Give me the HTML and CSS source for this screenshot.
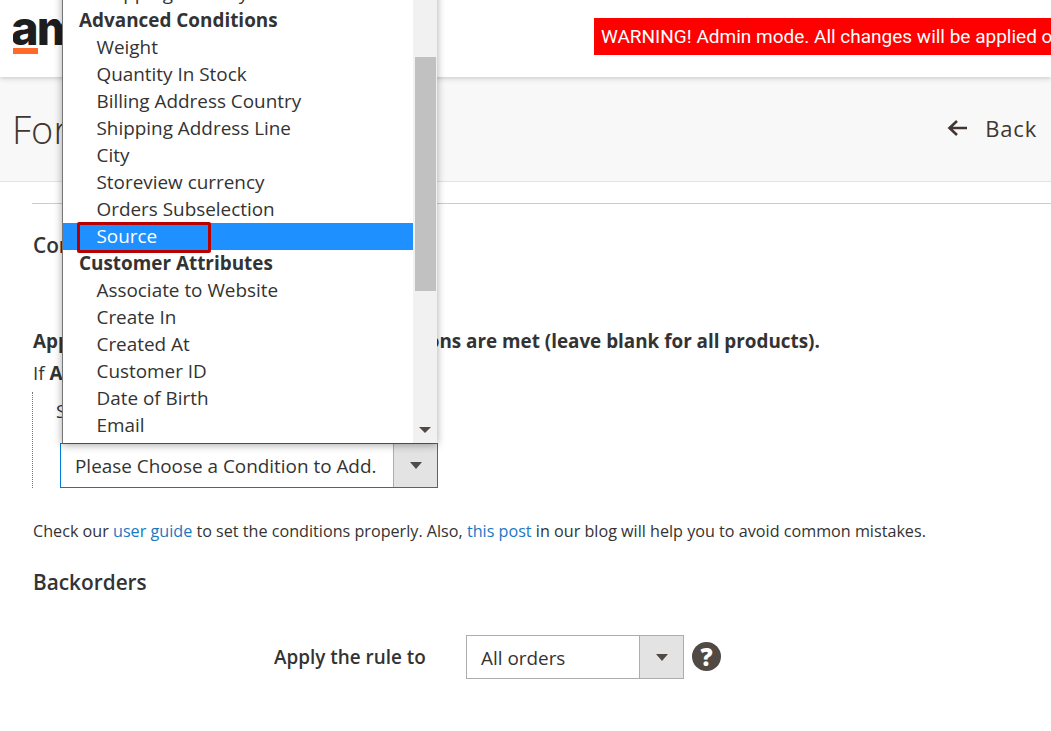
FILE: index.html
```html
<!DOCTYPE html>
<html lang="en">
<head>
    <meta charset="UTF-8">
    <title>Form</title>
    <link rel="stylesheet" href="styles.css">
</head>
<body>
    <header class="top-bar">
        <div class="logo">
            <span class="logo-text">am</span>
            <span class="logo-bar"></span>
        </div>
        <div class="warning">WARNING! Admin mode. All changes will be applied on all store views</div>
    </header>

    <div class="title-band">
        <h1 class="page-title">Form</h1>
        <a class="back-link" href="#">
            <svg class="back-icon" width="20" height="18" viewBox="0 0 20 18">
                <path d="M10 2 2.5 9l7.5 7M2.5 9H20" fill="none" stroke="#41362f" stroke-width="2.6"/>
            </svg>
            <span>Back</span>
        </a>
    </div>

    <main class="content">
        <section class="conditions">
            <h2 class="section-title">Conditions</h2>
            <p class="rule-intro">Apply the rule only if the following conditions are met (leave blank for all products).</p>
            <p class="rule-if">If <b>ALL</b> of these conditions are <b>TRUE</b> :</p>
            <div class="rule-tree">
                <div class="rule-line">Source is</div>
                <div class="select select-active select-add">
                    <span class="select-value">Please Choose a Condition to Add.</span>
                    <span class="select-btn"><i class="arrow"></i></span>
                </div>
            </div>
            <p class="rule-note">Check our <a href="#">user guide</a> to set the conditions properly. Also, <a href="#">this post</a> in our blog will help you to avoid common mistakes.</p>
        </section>

        <section class="backorders">
            <h2 class="section-title">Backorders</h2>
            <div class="field">
                <label class="field-label">Apply the rule to</label>
                <div class="select select-orders">
                    <span class="select-value">All orders</span>
                    <span class="select-btn"><i class="arrow"></i></span>
                </div>
                <span class="help">?</span>
            </div>
        </section>
    </main>

    <div class="dropdown">
        <ul class="dropdown-list">
            <li class="option">Shipping Country</li>
            <li class="group">Advanced Conditions</li>
            <li class="option">Weight</li>
            <li class="option">Quantity In Stock</li>
            <li class="option">Billing Address Country</li>
            <li class="option">Shipping Address Line</li>
            <li class="option">City</li>
            <li class="option">Storeview currency</li>
            <li class="option">Orders Subselection</li>
            <li class="option selected">Source<span class="red-box"></span></li>
            <li class="group">Customer Attributes</li>
            <li class="option">Associate to Website</li>
            <li class="option">Create In</li>
            <li class="option">Created At</li>
            <li class="option">Customer ID</li>
            <li class="option">Date of Birth</li>
            <li class="option">Email</li>
        </ul>
        <div class="scrollbar">
            <div class="scroll-thumb"></div>
            <i class="arrow scroll-arrow"></i>
        </div>
    </div>
</body>
</html>
```

FILE: styles.css
```css
* {
    margin: 0;
    padding: 0;
    box-sizing: border-box;
}

html, body {
    height: 100%;
    overflow: hidden;
}

body {
    font-family: 'Open Sans', sans-serif;
    color: #333333;
    background: white;
    position: relative;
}

a {
    color: #1979c3;
    text-decoration: none;
}

.top-bar {
    height: 77px;
    display: flex;
    align-items: flex-start;
    background: white;
    box-shadow: 0 1px 5px rgba(60, 70, 90, 0.3);
    position: relative;
    padding-left: 13px;
    white-space: nowrap;
}

.logo {
    flex: none;
    width: 49px;
    overflow: hidden;
    padding-top: 5px;
}

.logo-text {
    display: block;
    font-family: Inter, sans-serif;
    font-size: 47px;
    font-weight: 800;
    line-height: 46px;
    letter-spacing: -2px;
    margin-left: -2px;
    color: #1d1d1f;
}

.logo-bar {
    display: block;
    width: 25px;
    height: 6px;
    margin-top: -3px;
    background: #ff6a2b;
}

.warning {
    flex: none;
    margin: 18px 0 0 532px;
    height: 37px;
    padding: 0 8px 0 7px;
    background: #ff0000;
    color: white;
    font-family: Roboto, sans-serif;
    font-size: 19px;
    line-height: 37px;
}

.title-band {
    height: 105px;
    display: flex;
    justify-content: space-between;
    align-items: center;
    padding: 0 14px 0 12px;
    background: #f8f8f8;
    border-bottom: 1px solid #e3e3e3;
}

.page-title {
    font-size: 38px;
    font-weight: 300;
    color: #41362f;
}

.back-link {
    display: flex;
    align-items: center;
    gap: 18px;
    color: #41362f;
    font-size: 22px;
    line-height: 28px;
    letter-spacing: 0.8px;
    margin-top: -2px;
}

.content {
    margin: 21px 0 0 32px;
    border-top: 1px solid #cccccc;
}

.conditions {
    padding: 24px 0 0 1px;
}

.backorders {
    margin-top: 22px;
    padding-left: 1px;
}

.section-title {
    font-size: 20.8px;
    font-weight: 600;
    line-height: 34px;
}

.rule-intro {
    margin-top: 66px;
    font-size: 18.85px;
    font-weight: 700;
    line-height: 27px;
    white-space: nowrap;
}

.rule-if {
    margin-top: 5px;
    font-size: 18.9px;
    line-height: 27px;
}

.rule-tree {
    margin: 5px 0 0 -1px;
    height: 96px;
    padding: 6px 0 0 23px;
    border-left: 1px dotted #777777;
}

.rule-line {
    font-size: 18.9px;
    line-height: 27px;
}

.select {
    display: flex;
    background: white;
    border: 1px solid #adadad;
    font-size: 18.9px;
}

.select-active {
    border-color: #007bdb;
}

.select-add {
    width: 378px;
    height: 45px;
    margin: 18px 0 0 4px;
}

.select-orders {
    width: 218px;
    height: 44px;
}

.select-value {
    flex: 1;
    padding-left: 14px;
    line-height: 45px;
    white-space: nowrap;
}

.select-btn {
    width: 44px;
    display: flex;
    align-items: center;
    justify-content: center;
    background: #e3e3e3;
    border-left: 1px solid #adadad;
}

.arrow {
    display: block;
    width: 0;
    height: 0;
    border-left: 6px solid transparent;
    border-right: 6px solid transparent;
    border-top: 7px solid #514943;
}

.rule-note {
    margin-top: 31px;
    font-size: 16.16px;
    line-height: 24px;
    white-space: nowrap;
}

.section-title + .field {
    margin-top: 36px;
}

.field {
    display: flex;
    align-items: center;
    padding-left: 241px;
}

.field-label {
    width: 192px;
    font-size: 18.9px;
    font-weight: 600;
}

.help {
    width: 29px;
    height: 29px;
    margin: -1px 0 0 8px;
    border-radius: 50%;
    background: #514943;
    color: white;
    font-size: 24px;
    font-weight: 800;
    line-height: 29px;
    text-align: center;
}

.dropdown {
    position: absolute;
    left: 62px;
    top: -20px;
    width: 375px;
    height: 463px;
    display: flex;
    background: white;
    border-left: 1px solid #777777;
    box-shadow: 0 2px 8px rgba(0, 0, 0, 0.35);
}

.dropdown-list {
    flex: 1;
    list-style: none;
    overflow: hidden;
    font-size: 18.9px;
    line-height: 27px;
}

.option {
    height: 27px;
    padding-left: 33.5px;
    position: relative;
    white-space: nowrap;
}

.group {
    height: 27px;
    padding-left: 16px;
    font-weight: 700;
}

.selected {
    background: #1e90ff;
    color: white;
}

.red-box {
    position: absolute;
    left: 14px;
    top: -1px;
    width: 134px;
    height: 31px;
    border: 3px solid #b80000;
    border-radius: 2px;
}

.scrollbar {
    width: 24px;
    background: #f1f1f1;
    position: relative;
}

.scroll-thumb {
    margin: 77px 1px 0 2px;
    height: 234px;
    background: #c1c1c1;
}

.scroll-arrow {
    position: absolute;
    left: 6px;
    bottom: 10px;
    border-top-width: 6px;
}
```
